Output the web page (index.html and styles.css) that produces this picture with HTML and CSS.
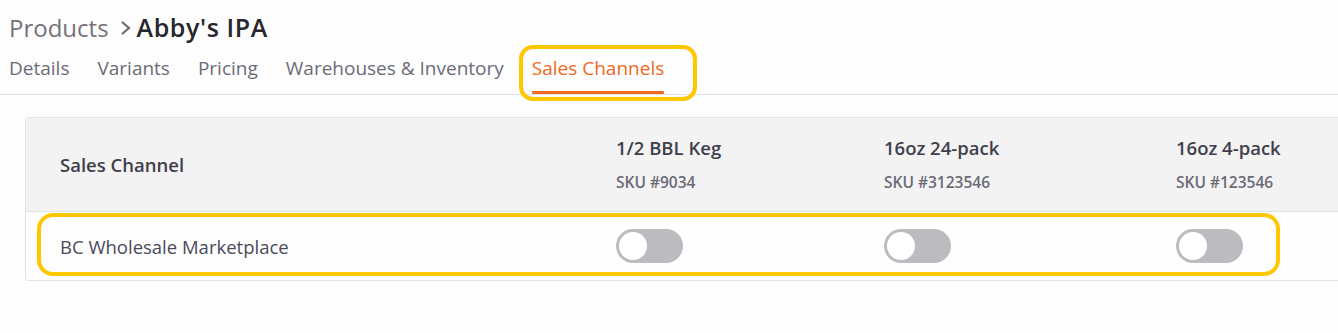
FILE: index.html
```html
<!DOCTYPE html>
<html>
<head>
<meta charset="utf-8">
<link rel="stylesheet" href="styles.css">
</head>
<body>
<div class="page">
  <header class="head">
    <div class="crumbs">
      <span class="crumb-parent">Products</span>
      <svg class="crumb-sep" width="14" height="16" viewBox="0 0 14 16"><path d="M3 2 L10 8 L3 14" fill="none" stroke="#6c6a70" stroke-width="2.2"/></svg>
      <span class="crumb-current">Abby's IPA</span>
    </div>
    <nav class="tabs">
      <span class="tab">Details</span>
      <span class="tab">Variants</span>
      <span class="tab">Pricing</span>
      <span class="tab">Warehouses &amp; Inventory</span>
      <span class="tab tab-active">Sales Channels<span class="mark mark-tab"></span></span>
    </nav>
  </header>
  <section class="card">
    <div class="row row-head">
      <div class="cell cell-first"><span class="head-title">Sales Channel</span></div>
      <div class="cell"><div class="head-title">1/2 BBL Keg</div><div class="sku">SKU #9034</div></div>
      <div class="cell"><div class="head-title">16oz 24-pack</div><div class="sku">SKU #3123546</div></div>
      <div class="cell"><div class="head-title">16oz 4-pack</div><div class="sku">SKU #123546</div></div>
    </div>
    <div class="row row-body">
      <div class="cell cell-first"><span class="channel">BC Wholesale Marketplace</span></div>
      <div class="cell"><span class="toggle"><span class="knob"></span></span></div>
      <div class="cell"><span class="toggle"><span class="knob"></span></span></div>
      <div class="cell"><span class="toggle"><span class="knob"></span></span></div>
      <span class="mark mark-row"></span>
    </div>
  </section>
</div>
</body>
</html>
```
FILE: styles.css
```css
* { box-sizing: border-box; }
html, body { margin: 0; padding: 0; }
body {
  background: #fdfdfd;
  font-family: "Open Sans", "Noto Sans", sans-serif;
  color: #3c3c4a;
  overflow: hidden;
}
.page { width: 1338px; height: 333px; overflow: hidden; }
.head { padding-top: 9px; border-bottom: 1px solid #e2e2e2; }
.crumbs { padding-left: 9px; height: 36px; display: flex; align-items: center; gap: 0; font-size: 24px; }
.crumb-parent { color: #757178; }
.crumb-sep { margin: 2px 4px 0 10px; }
.crumb-current { color: #26262b; font-weight: 600; font-size: 25px; letter-spacing: 0.6px; }
.tabs { display: flex; gap: 28px; padding-left: 9px; margin-top: 4px; height: 45px; }
.tab { position: relative; font-size: 19px; font-weight: 500; color: #6c6c78; padding-top: 7px; line-height: 24px; }
.tab-active { color: #ee6a22; }
.tab-active::after {
  content: ""; position: absolute; left: 0; right: 0; bottom: 0;
  height: 3px; background: #ee6a22; border-radius: 1px;
}
.mark { position: absolute; border: 4px solid #fec700; border-radius: 14px; pointer-events: none; }
.mark-tab { left: -13px; right: -33px; top: -4px; bottom: -7px; }
.card {
  margin: 22px 0 0 25px;
  width: 1400px;
  border: 1px solid #e4e4e4;
  border-radius: 3px 0 0 3px;
  background: #fefefe;
}
.row { display: grid; grid-template-columns: 590px 268px 292px 1fr; position: relative; }
.row-head { background: #f3f3f3; height: 94px; border-bottom: 1px solid #e2e2e2; }
.row-head .cell { display: flex; flex-direction: column; justify-content: center; }
.cell-first { padding-left: 34px; }
.head-title { font-size: 18.5px; font-weight: 600; color: #3f3f4c; line-height: 22px; }
.sku { font-size: 15.5px; color: #6b6a75; margin-top: 13px; line-height: 20px; font-weight: 600; }
.row-body { height: 68px; align-items: center; }
.row-body .cell { display: flex; align-items: center; }
.channel { font-size: 18.5px; color: #4a4a5a; }
.toggle {
  width: 67px; height: 34px; border-radius: 17px; background: #bcbbc0;
  display: flex; align-items: center; padding-left: 3px;
}
.knob { width: 28px; height: 28px; border-radius: 50%; background: #ffffff; }
.mark-row { left: 11px; width: 1243px; top: 1px; bottom: 4px; border-radius: 16px; }
```
